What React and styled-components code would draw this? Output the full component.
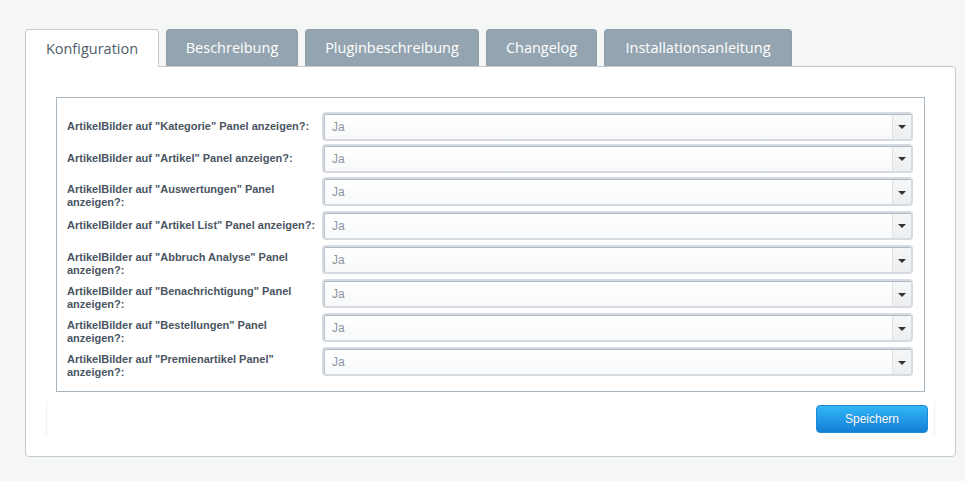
import React from "react";
import styled, { createGlobalStyle } from "styled-components";

const Global = createGlobalStyle`
  html, body { margin: 0; padding: 0; background: #f5f7f7; }
  body { font-family: "Liberation Sans", Arial, sans-serif; }
`;

const Page = styled.div`
  padding: 29px 9px 24px 25px;
  width: 931px;
`;

const TabBar = styled.div`
  display: flex;
  gap: 7px;
  height: 37px;
  position: relative;
  z-index: 1;
`;

const Tab = styled.div`
  box-sizing: border-box;
  height: ${(p) => (p.$active ? "38px" : "37px")};
  width: ${(p) => p.$w}px;
  display: flex;
  align-items: center;
  justify-content: center;
  border-radius: 4px 4px 0 0;
  font-family: "Open Sans", sans-serif;
  font-size: 14.5px;
  white-space: nowrap;
  color: ${(p) => (p.$active ? "#4f5e6a" : "#ffffff")};
  background: ${(p) => (p.$active ? "#ffffff" : "#94a5b1")};
  border: 1px solid ${(p) => (p.$active ? "#c8cdd0" : "#8d9ea9")};
  border-bottom: ${(p) => (p.$active ? "none" : "1px solid #94a5b1")};
`;

const Panel = styled.div`
  background: #fff;
  border: 1px solid #c5c9cb;
  border-radius: 0 4px 4px 4px;
  padding: 20px;
`;

const Content = styled.div`
  padding: 10px;
`;

const Fieldset = styled.div`
  border: 1px solid #a9b6c0;
  padding: 12px 11px 12px 10px;
  display: flex;
  flex-direction: column;
`;

const Row = styled.div`
  display: grid;
  grid-template-columns: 255px 1fr;
  align-items: center;
  height: ${(p) => p.$h}px;
`;

const Label = styled.label`
  font-size: 11px;
  font-weight: bold;
  color: #4a5562;
  line-height: 13px;
  padding-right: 4px;
  padding-top: ${(p) => (p.$twoLines ? 9 : 0)}px;
`;

const SelectFrame = styled.div`
  height: 29px;
  box-sizing: border-box;
  border: 2px solid #d5dbe0;
  border-radius: 4px;
  background: #d5dbe0;
  display: flex;
`;

const SelectInner = styled.div`
  flex: 1;
  display: flex;
  background: linear-gradient(#ffffff, #f8f9fa);
  border-top: 1px solid #aeb8c0;
  border-left: 1px solid #bcc4ca;
  border-radius: 2px;
  overflow: hidden;
`;

const Value = styled.div`
  flex: 1;
  display: flex;
  align-items: center;
  padding-left: 7px;
  font-size: 12px;
  color: #8a95a0;
`;

const Arrow = styled.div`
  width: 18px;
  display: flex;
  align-items: center;
  justify-content: center;
  background: linear-gradient(#f5f6f7, #eceef0);
  border-left: 1px solid #e0e3e6;
  &::after {
    content: "";
    width: 0;
    height: 0;
    border-left: 4px solid transparent;
    border-right: 4px solid transparent;
    border-top: 4px solid #333;
    margin-top: 1px;
  }
`;

const Footer = styled.div`
  height: 34px;
  box-sizing: border-box;
  border-left: 1px solid #f0f1f1;
  border-right: 1px solid #f0f1f1;
  display: flex;
  justify-content: flex-end;
  align-items: flex-start;
  padding: 3px 6px 0 0;
`;

const SaveButton = styled.button`
  width: 112px;
  height: 28px;
  border: 1px solid #1a8ad9;
  border-radius: 4px;
  background: linear-gradient(#33b6f8, #137fd6);
  color: #fff;
  font-family: "Liberation Sans", Arial, sans-serif;
  font-size: 12px;
  text-shadow: 0 0 1px rgba(0, 60, 120, 0.4);
  cursor: pointer;
`;

const tabs = [
  { label: "Konfiguration", w: 134, active: true },
  { label: "Beschreibung", w: 132 },
  { label: "Pluginbeschreibung", w: 174 },
  { label: "Changelog", w: 111 },
  { label: "Installationsanleitung", w: 188 },
];

const rows = [
  { label: 'ArtikelBilder auf "Kategorie" Panel anzeigen?:', h: 32 },
  { label: 'ArtikelBilder auf "Artikel" Panel anzeigen?:', h: 32 },
  { label: 'ArtikelBilder auf "Auswertungen" Panel anzeigen?:', h: 34, two: true },
  { label: 'ArtikelBilder auf "Artikel List" Panel anzeigen?:', h: 34 },
  { label: 'ArtikelBilder auf "Abbruch Analyse" Panel anzeigen?:', h: 34, two: true },
  { label: 'ArtikelBilder auf "Benachrichtigung" Panel anzeigen?:', h: 34, two: true },
  { label: 'ArtikelBilder auf "Bestellungen" Panel anzeigen?:', h: 34, two: true },
  { label: 'ArtikelBilder auf "Premienartikel Panel" anzeigen?:', h: 35, two: true },
];

export default function App() {
  return (
    <>
      <Global />
      <Page>
        <TabBar>
          {tabs.map((t) => (
            <Tab key={t.label} $active={t.active} $w={t.w}>
              {t.label}
            </Tab>
          ))}
        </TabBar>
        <Panel>
          <Content>
            <Fieldset>
              {rows.map((r) => (
                <Row key={r.label} $h={r.h}>
                  <Label $twoLines={r.two}>{r.label}</Label>
                  <SelectFrame>
                    <SelectInner>
                      <Value>Ja</Value>
                      <Arrow />
                    </SelectInner>
                  </SelectFrame>
                </Row>
              ))}
            </Fieldset>
          </Content>
          <Footer>
            <SaveButton>Speichern</SaveButton>
          </Footer>
        </Panel>
      </Page>
    </>
  );
}
